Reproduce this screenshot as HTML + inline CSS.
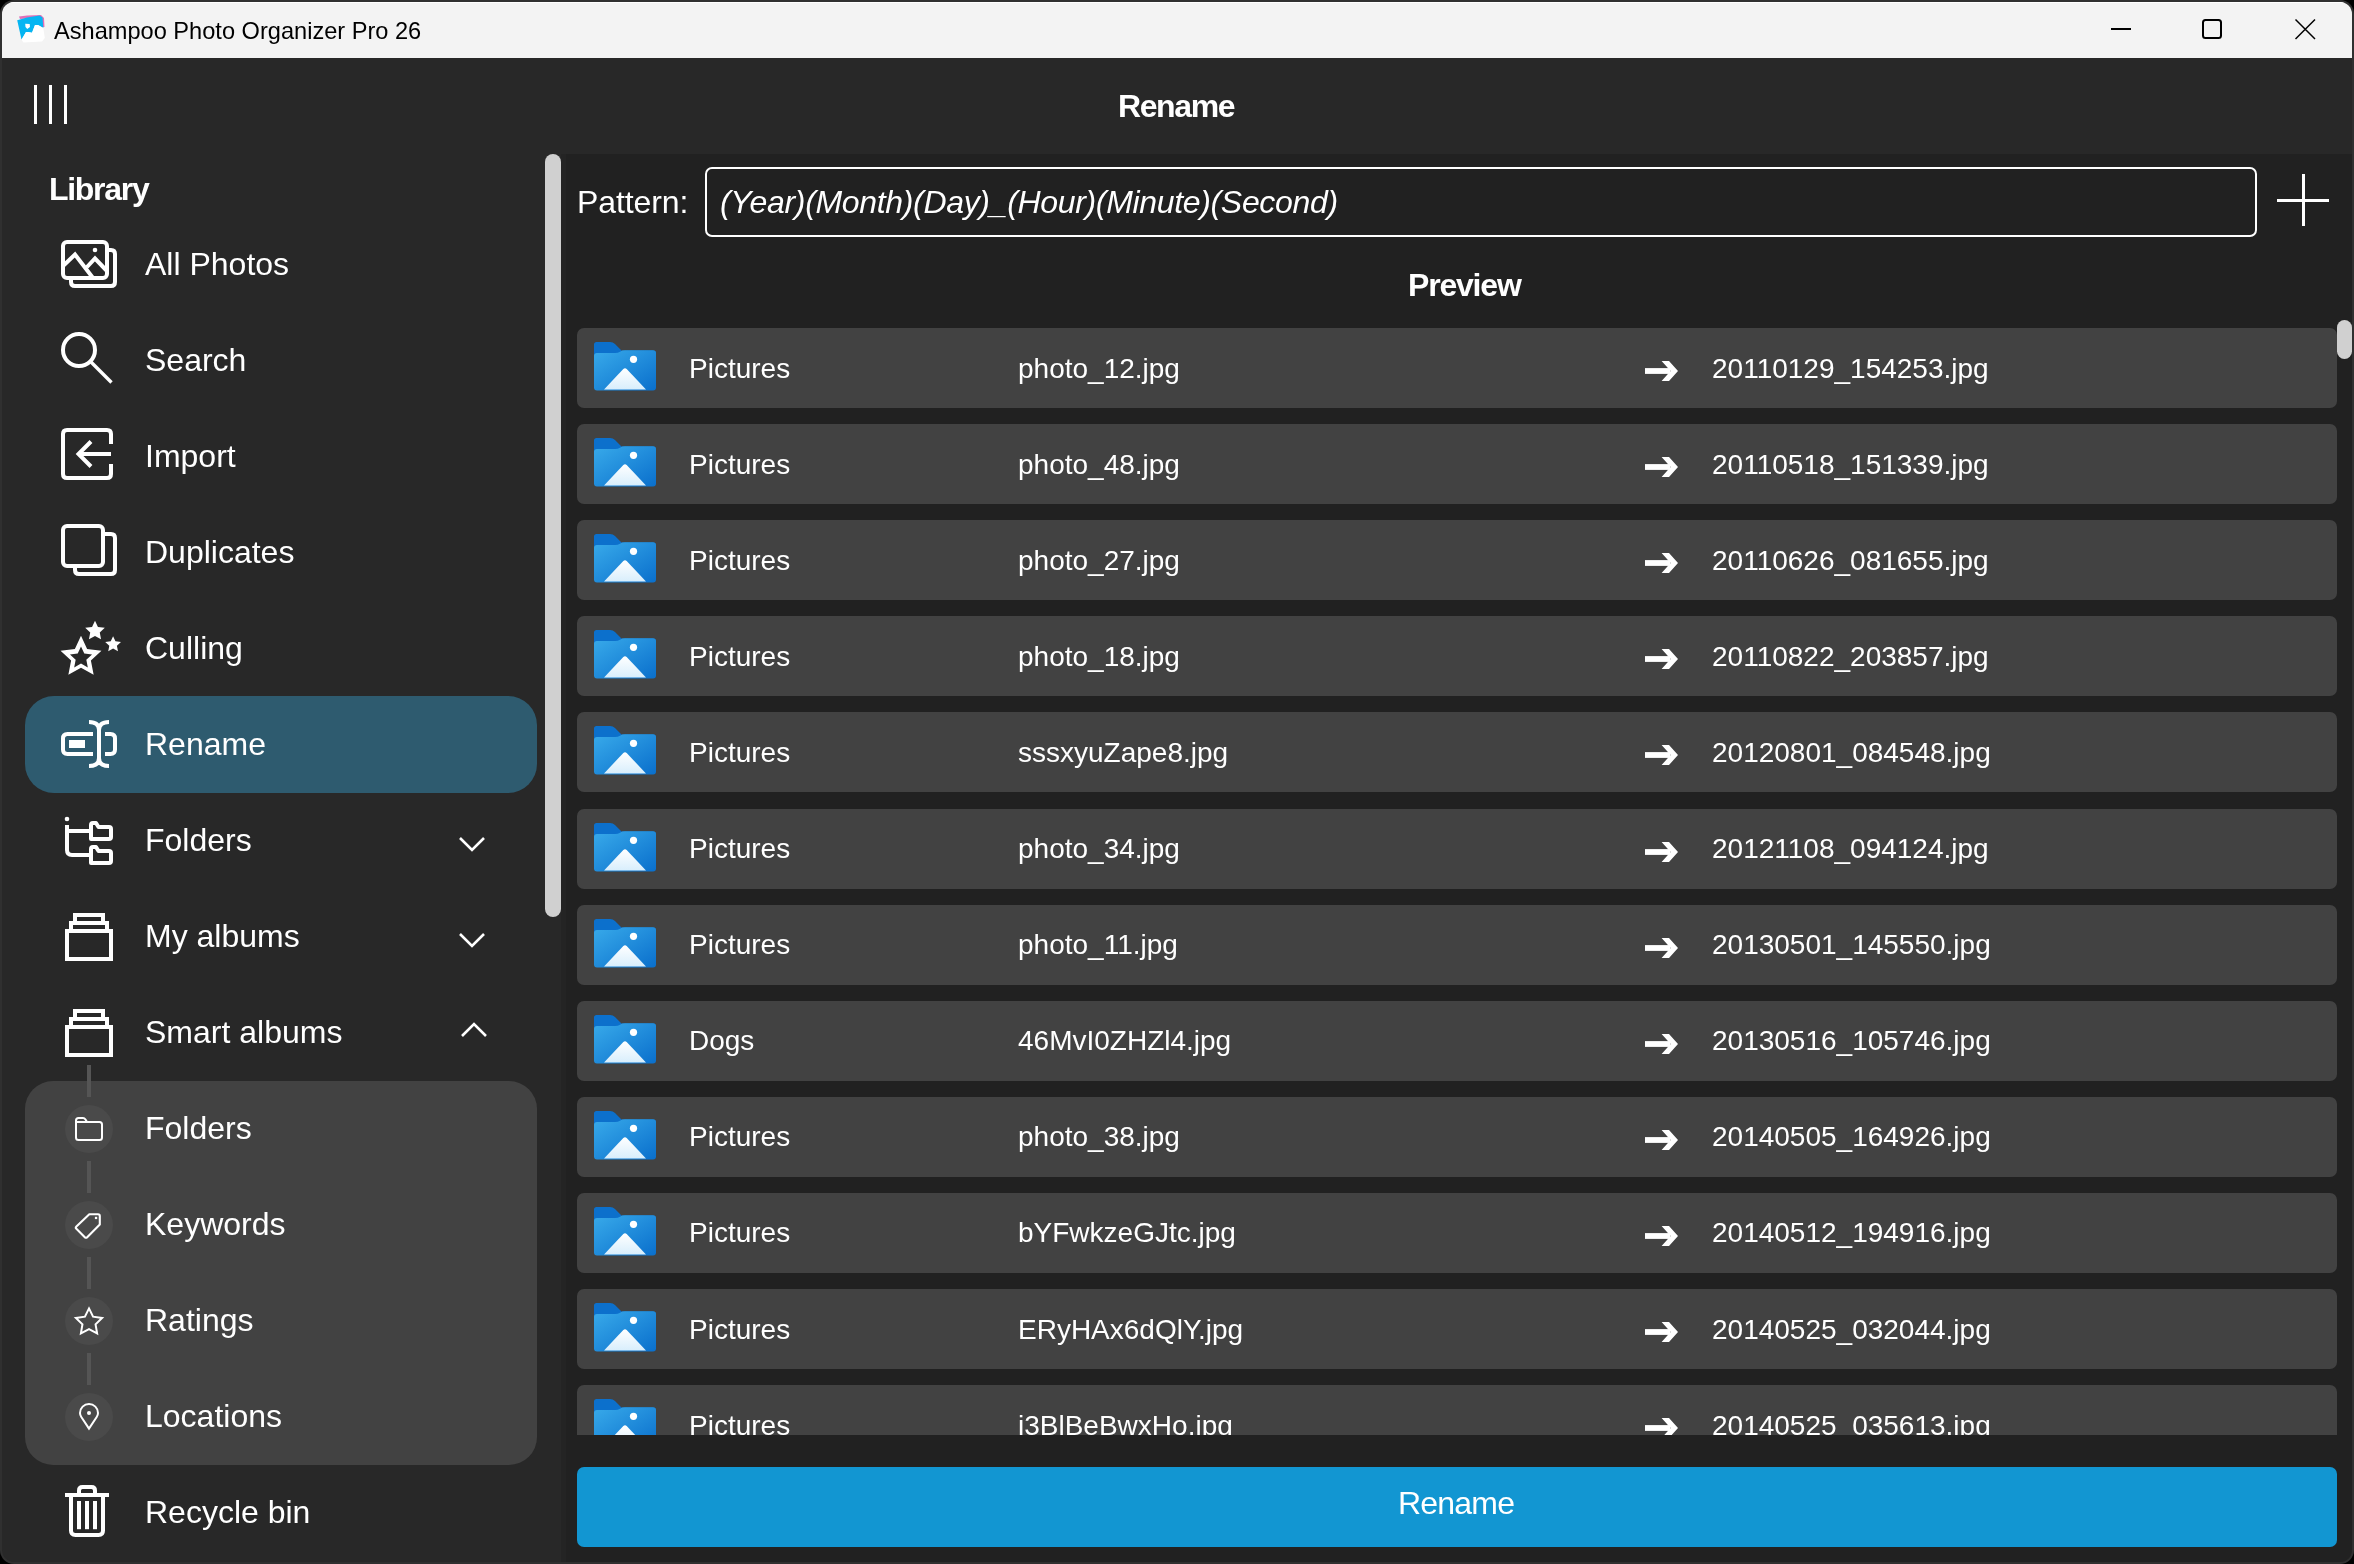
<!DOCTYPE html>
<html><head><meta charset="utf-8">
<style>
*{box-sizing:border-box;margin:0;padding:0}
html,body{width:2354px;height:1564px;overflow:hidden;background:#000}
#win{position:absolute;left:0;top:0;width:2354px;height:1564px;border-radius:14px;background:#303030}
#inner{position:absolute;left:0;top:0;width:2354px;height:1564px;background:#282828;clip-path:inset(2px round 12px)}
.a{position:absolute;display:block}
.t{position:absolute;white-space:nowrap;line-height:1;font-family:"Liberation Sans",sans-serif;color:#fff;will-change:transform}
</style></head><body>
<div id="win"></div><div id="inner">
<div class="a" style="left:0;top:0;width:2354px;height:58px;background:#f3f3f3"></div>
<div class="a" style="left:0;top:2px;width:2354px;height:1px;background:#fff"></div>
<svg class="a" style="left:14px;top:12px" width="34" height="34" viewBox="14 12 34 34"><path d="M19 16.5 L27 15.6 L41 15 L44 18 L44.5 27 L42 27 L40 17.5 L20 19 Z" fill="#e070b8"/><path d="M17.2 20.2 L27 17.5 L39.5 15.5 L42.5 17.5 L43.3 28 L38 25 L35 25 L32 32.8 L28 32 L26 32 L21.5 39.5 Z" fill="#05b5f2"/><path d="M21.5 39.8 L26 32 L28 32 L32 32.8 L35 25 L38 25 L43.3 28 L44.8 38 L42 41.5 L23.5 42.5 Z" fill="#ffffff"/><path d="M25.2 23.8 L29.7 24 L30 27 L27.2 29 L25.5 27 Z" fill="#fff"/></svg>
<div class="t" style="left:53.5px;top:19.5px;font-size:23.6px;font-weight:400;font-style:normal;color:#000;letter-spacing:0px;">Ashampoo Photo Organizer Pro 26</div>
<div class="a" style="left:2111px;top:28px;width:20px;height:2px;background:#000"></div>
<svg class="a" style="left:2195px;top:12px" width="34" height="34" viewBox="2195 12 34 34"><rect x="2203" y="20" width="18" height="18" rx="2.5" fill="none" stroke="#000" stroke-width="2"/></svg>
<svg class="a" style="left:2288px;top:12px" width="34" height="34" viewBox="2288 12 34 34"><path d="M2295.5 19.5 L2315 39 M2315 19.5 L2295.5 39" stroke="#000" stroke-width="1.5"/></svg>
<div class="a" style="left:34px;top:85px;width:3px;height:39px;background:#fff"></div>
<div class="a" style="left:49px;top:85px;width:3px;height:39px;background:#fff"></div>
<div class="a" style="left:64px;top:85px;width:3px;height:39px;background:#fff"></div>
<div class="t" style="left:1117.5px;top:89.9px;font-size:32px;font-weight:700;font-style:normal;color:#fff;letter-spacing:-1.4px;">Rename</div>
<div class="t" style="left:48.6px;top:172.9px;font-size:32px;font-weight:700;font-style:normal;color:#fff;letter-spacing:-1.3px;">Library</div>
<div class="a" style="left:25px;top:696px;width:512px;height:97px;border-radius:29px;background:#2e5b6f"></div>
<div class="a" style="left:25px;top:1081px;width:512px;height:384px;border-radius:28px;background:#424242"></div>
<div class="t" style="left:145.0px;top:247.9px;font-size:32px;font-weight:400;font-style:normal;color:#fff;letter-spacing:0px;">All Photos</div>
<div class="t" style="left:145.0px;top:343.9px;font-size:32px;font-weight:400;font-style:normal;color:#fff;letter-spacing:0px;">Search</div>
<div class="t" style="left:145.0px;top:439.9px;font-size:32px;font-weight:400;font-style:normal;color:#fff;letter-spacing:0px;">Import</div>
<div class="t" style="left:145.0px;top:535.9px;font-size:32px;font-weight:400;font-style:normal;color:#fff;letter-spacing:0px;">Duplicates</div>
<div class="t" style="left:145.0px;top:631.9px;font-size:32px;font-weight:400;font-style:normal;color:#fff;letter-spacing:0px;">Culling</div>
<div class="t" style="left:145.0px;top:727.9px;font-size:32px;font-weight:400;font-style:normal;color:#fff;letter-spacing:0px;">Rename</div>
<div class="t" style="left:145.0px;top:823.9px;font-size:32px;font-weight:400;font-style:normal;color:#fff;letter-spacing:0px;">Folders</div>
<div class="t" style="left:145.0px;top:919.9px;font-size:32px;font-weight:400;font-style:normal;color:#fff;letter-spacing:0px;">My albums</div>
<div class="t" style="left:145.0px;top:1015.9px;font-size:32px;font-weight:400;font-style:normal;color:#fff;letter-spacing:0px;">Smart albums</div>
<div class="t" style="left:145.0px;top:1111.9px;font-size:32px;font-weight:400;font-style:normal;color:#fff;letter-spacing:0px;">Folders</div>
<div class="t" style="left:145.0px;top:1207.9px;font-size:32px;font-weight:400;font-style:normal;color:#fff;letter-spacing:0px;">Keywords</div>
<div class="t" style="left:145.0px;top:1303.9px;font-size:32px;font-weight:400;font-style:normal;color:#fff;letter-spacing:0px;">Ratings</div>
<div class="t" style="left:145.0px;top:1399.9px;font-size:32px;font-weight:400;font-style:normal;color:#fff;letter-spacing:0px;">Locations</div>
<div class="t" style="left:145.0px;top:1495.9px;font-size:32px;font-weight:400;font-style:normal;color:#fff;letter-spacing:0px;">Recycle bin</div>
<svg class="a" style="left:55px;top:234px" width="70" height="60" viewBox="55 234 70 60"><path d="M71 279 V282 Q71 286 75 286 H111 Q115 286 115 282 V254 Q115 250 111 250 H107" fill="none" stroke="#fff" stroke-width="4"/><rect x="63" y="242" width="44" height="36" rx="4" fill="none" stroke="#fff" stroke-width="4"/><path d="M63 266 L75 254.5 L93 278 M87 267 L95 258.5 L107 271" fill="none" stroke="#fff" stroke-width="4" stroke-linejoin="miter"/><circle cx="95" cy="250" r="2.3" fill="#fff"/></svg>
<svg class="a" style="left:55px;top:326px" width="70" height="64" viewBox="55 326 70 64"><circle cx="79" cy="350" r="16" fill="none" stroke="#fff" stroke-width="4"/><path d="M90.5 361.5 L111.5 382.5" stroke="#fff" stroke-width="3.4"/></svg>
<svg class="a" style="left:55px;top:422px" width="70" height="64" viewBox="55 422 70 64"><path d="M111 444 V434 Q111 430 107 430 H67 Q63 430 63 434 V474 Q63 478 67 478 H107 Q111 478 111 474 V464" fill="none" stroke="#fff" stroke-width="4"/><path d="M111 454 H79 M91 441.5 L78.5 454 L91 466.5" fill="none" stroke="#fff" stroke-width="4"/></svg>
<svg class="a" style="left:55px;top:518px" width="70" height="64" viewBox="55 518 70 64"><path d="M75 566 V570 Q75 574 79 574 H111 Q115 574 115 570 V538 Q115 534 111 534 H103" fill="none" stroke="#fff" stroke-width="4"/><rect x="63" y="526" width="40" height="40" rx="4" fill="none" stroke="#fff" stroke-width="4"/></svg>
<svg class="a" style="left:55px;top:614px" width="72" height="66" viewBox="55 614 72 66"><polygon points="81.00,635.80 87.11,648.89 101.45,650.66 90.89,660.51 93.64,674.69 81.00,667.70 68.36,674.69 71.11,660.51 60.55,650.66 74.89,648.89" fill="#fff"/><polygon points="81.00,646.40 84.29,653.47 92.03,654.42 86.33,659.73 87.82,667.38 81.00,663.60 74.18,667.38 75.67,659.73 69.97,654.42 77.71,653.47" fill="#282828"/><polygon points="95.00,620.70 97.94,626.95 104.80,627.82 99.76,632.55 101.05,639.33 95.00,636.00 88.95,639.33 90.24,632.55 85.20,627.82 92.06,626.95" fill="#fff"/><polygon points="113.10,636.20 115.45,641.26 120.99,641.94 116.90,645.74 117.98,651.21 113.10,648.50 108.22,651.21 109.30,645.74 105.21,641.94 110.75,641.26" fill="#fff"/></svg>
<svg class="a" style="left:55px;top:712px" width="70" height="64" viewBox="55 712 70 64"><path d="M93 734 H67.5 Q63 734 63 738.5 V749.5 Q63 754 67.5 754 H93 M105 734 H110.5 Q115 734 115 738.5 V749.5 Q115 754 110.5 754 H105" fill="none" stroke="#fff" stroke-width="4"/><rect x="69" y="740" width="16" height="8" fill="#fff"/><path d="M89 722 Q99 722 99 730 Q99 722 109 722 M99 728 V760 M89 766 Q99 766 99 758 Q99 766 109 766" fill="none" stroke="#fff" stroke-width="4"/></svg>
<svg class="a" style="left:55px;top:808px" width="70" height="64" viewBox="55 808 70 64"><circle cx="67" cy="819" r="2.3" fill="#fff"/><path d="M67 825 V850 Q67 855 72 855 H90 M67 831 H90" fill="none" stroke="#fff" stroke-width="4"/><path d="M91 839 V825 Q91 823 93 823 H96 L98.5 827 H109 Q111 827 111 829 V837 Q111 839 109 839 H93 Q91 839 91 837 Z" fill="none" stroke="#fff" stroke-width="4" stroke-linejoin="round"/><path d="M91 863 V849 Q91 847 93 847 H96 L98.5 851 H109 Q111 851 111 853 V861 Q111 863 109 863 H93 Q91 863 91 861 Z" fill="none" stroke="#fff" stroke-width="4" stroke-linejoin="round"/></svg>
<svg class="a" style="left:55px;top:906px" width="70" height="64" viewBox="55 906 70 64"><rect x="67" y="931" width="44" height="28" fill="none" stroke="#fff" stroke-width="4"/><path d="M71 931 V923 H107 V931 M75 923 V915 H103 V923" fill="none" stroke="#fff" stroke-width="4"/></svg>
<svg class="a" style="left:55px;top:1002px" width="70" height="64" viewBox="55 1002 70 64"><rect x="67" y="1027" width="44" height="28" fill="none" stroke="#fff" stroke-width="4"/><path d="M71 1027 V1019 H107 V1027 M75 1019 V1011 H103 V1019" fill="none" stroke="#fff" stroke-width="4"/></svg>
<svg class="a" style="left:450px;top:825px" width="45" height="35" viewBox="450 825 45 35"><path d="M460 838 L472 850 L484 838" fill="none" stroke="#fff" stroke-width="2.6"/></svg>
<svg class="a" style="left:450px;top:921px" width="45" height="35" viewBox="450 921 45 35"><path d="M460 934 L472 946 L484 934" fill="none" stroke="#fff" stroke-width="2.6"/></svg>
<svg class="a" style="left:452px;top:1014px" width="45" height="35" viewBox="452 1014 45 35"><path d="M462 1036 L474 1024 L486 1036" fill="none" stroke="#fff" stroke-width="2.6"/></svg>
<div class="a" style="left:87px;top:1065px;width:4px;height:32px;background:#555555"></div>
<div class="a" style="left:87px;top:1161px;width:4px;height:32px;background:#555555"></div>
<div class="a" style="left:87px;top:1257px;width:4px;height:32px;background:#555555"></div>
<div class="a" style="left:87px;top:1353px;width:4px;height:32px;background:#555555"></div>
<div class="a" style="left:65px;top:1105px;width:48px;height:48px;border-radius:24px;background:#4a4a4a"></div>
<div class="a" style="left:65px;top:1201px;width:48px;height:48px;border-radius:24px;background:#4a4a4a"></div>
<div class="a" style="left:65px;top:1297px;width:48px;height:48px;border-radius:24px;background:#4a4a4a"></div>
<div class="a" style="left:65px;top:1393px;width:48px;height:48px;border-radius:24px;background:#4a4a4a"></div>
<svg class="a" style="left:65px;top:1105px" width="48" height="48" viewBox="65 1105 48 48"><path d="M76 1137.5 V1120.5 Q76 1118 78.5 1118 H83 Q84.5 1118 85.5 1119.5 L87 1122 H99.5 Q102 1122 102 1124.5 V1137.5 Q102 1140 99.5 1140 H78.5 Q76 1140 76 1137.5 Z M76 1122 H87" fill="none" stroke="#fff" stroke-width="2" stroke-linejoin="round"/></svg>
<svg class="a" style="left:65px;top:1201px" width="48" height="48" viewBox="65 1201 48 48"><path d="M89.3 1214.2 H98 Q99.8 1214.2 99.8 1216 V1224.6 L87.2 1237.2 Q86 1238.4 84.8 1237.2 L76.4 1228.8 Q75.2 1227.6 76.4 1226.4 Z" fill="none" stroke="#fff" stroke-width="2.1" stroke-linejoin="round"/><rect x="94.9" y="1216.8" width="2.3" height="2.3" fill="#fff"/></svg>
<svg class="a" style="left:65px;top:1297px" width="48" height="48" viewBox="65 1297 48 48"><polygon points="89.00,1308.40 93.06,1316.62 102.12,1317.94 95.56,1324.33 97.11,1333.36 89.00,1329.10 80.89,1333.36 82.44,1324.33 75.88,1317.94 84.94,1316.62" fill="none" stroke="#fff" stroke-width="2" stroke-linejoin="miter"/></svg>
<svg class="a" style="left:65px;top:1393px" width="48" height="48" viewBox="65 1393 48 48"><path d="M89 1428.6 L81.3 1417 Q80 1415 80 1413 A9 9 0 0 1 98 1413 Q98 1415 96.7 1417 Z" fill="none" stroke="#fff" stroke-width="2" stroke-linejoin="miter"/><circle cx="89" cy="1413" r="2" fill="#fff"/></svg>
<svg class="a" style="left:55px;top:1480px" width="70" height="64" viewBox="55 1480 70 64"><path d="M65 1495 H109" stroke="#fff" stroke-width="4"/><path d="M79 1494 V1490.5 Q79 1487 82.5 1487 H91.5 Q95 1487 95 1490.5 V1494" fill="none" stroke="#fff" stroke-width="4"/><path d="M71 1495 V1530.5 Q71 1535 75.5 1535 H98.5 Q103 1535 103 1530.5 V1495" fill="none" stroke="#fff" stroke-width="4"/><rect x="77" y="1501" width="4" height="28.2" fill="#fff"/><rect x="85" y="1501" width="4" height="28.2" fill="#fff"/><rect x="93" y="1501" width="4" height="28.2" fill="#fff"/></svg>
<div class="a" style="left:545px;top:154px;width:16px;height:763px;border-radius:8px;background:#d0d0d0"></div>
<div class="a" style="left:561px;top:154px;width:1793px;height:1410px;background:#212121"></div>
<div class="a" style="left:561px;top:154px;width:5px;height:1410px;background:#242424"></div>
<div class="t" style="left:576.8px;top:185.7px;font-size:32px;font-weight:400;font-style:normal;color:#fff;letter-spacing:-0.1px;">Pattern:</div>
<div class="a" style="left:705px;top:167px;width:1552px;height:70px;border:2px solid #fff;border-radius:7px"></div>
<div class="t" style="left:720.0px;top:185.9px;font-size:32px;font-weight:400;font-style:italic;color:#fff;letter-spacing:-0.33px;">(Year)(Month)(Day)_(Hour)(Minute)(Second)</div>
<div class="a" style="left:2277px;top:198.5px;width:52px;height:3px;background:#fff"></div>
<div class="a" style="left:2301.5px;top:174px;width:3px;height:52px;background:#fff"></div>
<div class="t" style="left:1407.6px;top:268.9px;font-size:32px;font-weight:700;font-style:normal;color:#fff;letter-spacing:-1.2px;">Preview</div>
<div class="a" style="left:577px;top:320px;width:1760px;height:1115px;overflow:hidden"><div class="a" style="left:0;top:8.0px;width:1760px;height:80px;border-radius:7px;background:#424242"><svg class="a" style="left:16px;top:10px" width="64" height="56" viewBox="0 0 64 56"><defs><linearGradient id="fg0" x1="0" y1="0" x2="1" y2="1"><stop offset="0" stop-color="#38aaea"/><stop offset="1" stop-color="#0a6fcc"/></linearGradient></defs><path d="M1 6.5 Q1 4 3.5 4 H17 Q20 4 22 6 L28.5 12.5 H60 Q63 12.5 63 15.5 V24 H1 Z" fill="#0c70cc"/><path d="M1 18 Q1 15 4 15 H22 Q25 15 27 13.7 Q29 12.3 32 12.3 H60 Q63 12.3 63 15.3 V49.5 Q63 52.5 60 52.5 H4 Q1 52.5 1 49.5 Z" fill="url(#fg0)"/><defs><linearGradient id="mg0" x1="0" y1="0" x2="0" y2="1"><stop offset="0" stop-color="#ffffff"/><stop offset="1" stop-color="#d8eefc"/></linearGradient></defs><path d="M11 51.5 L30.3 31 Q32 29.3 33.7 31 L53 51.5 Z" fill="url(#mg0)"/><circle cx="40.5" cy="21.3" r="3.6" fill="#fff"/></svg><div class="t" style="left:112.3px;top:26.5px;font-size:28px;letter-spacing:0px">Pictures</div><div class="t" style="left:440.5px;top:26.5px;font-size:28px;letter-spacing:0px">photo_12.jpg</div><svg class="a" style="left:1060px;top:30px" width="44" height="28" viewBox="0 0 44 28"><rect x="8" y="10.1" width="25" height="5.8" fill="#fff"/><path d="M24.6 3 H32 L41 13 L32 23 H24.6 L33.6 13 Z" fill="#fff"/></svg><div class="t" style="left:1135px;top:26.5px;font-size:28px">20110129_154253.jpg</div></div><div class="a" style="left:0;top:104.1px;width:1760px;height:80px;border-radius:7px;background:#424242"><svg class="a" style="left:16px;top:10px" width="64" height="56" viewBox="0 0 64 56"><defs><linearGradient id="fg1" x1="0" y1="0" x2="1" y2="1"><stop offset="0" stop-color="#38aaea"/><stop offset="1" stop-color="#0a6fcc"/></linearGradient></defs><path d="M1 6.5 Q1 4 3.5 4 H17 Q20 4 22 6 L28.5 12.5 H60 Q63 12.5 63 15.5 V24 H1 Z" fill="#0c70cc"/><path d="M1 18 Q1 15 4 15 H22 Q25 15 27 13.7 Q29 12.3 32 12.3 H60 Q63 12.3 63 15.3 V49.5 Q63 52.5 60 52.5 H4 Q1 52.5 1 49.5 Z" fill="url(#fg1)"/><defs><linearGradient id="mg1" x1="0" y1="0" x2="0" y2="1"><stop offset="0" stop-color="#ffffff"/><stop offset="1" stop-color="#d8eefc"/></linearGradient></defs><path d="M11 51.5 L30.3 31 Q32 29.3 33.7 31 L53 51.5 Z" fill="url(#mg1)"/><circle cx="40.5" cy="21.3" r="3.6" fill="#fff"/></svg><div class="t" style="left:112.3px;top:26.5px;font-size:28px;letter-spacing:0px">Pictures</div><div class="t" style="left:440.5px;top:26.5px;font-size:28px;letter-spacing:0px">photo_48.jpg</div><svg class="a" style="left:1060px;top:30px" width="44" height="28" viewBox="0 0 44 28"><rect x="8" y="10.1" width="25" height="5.8" fill="#fff"/><path d="M24.6 3 H32 L41 13 L32 23 H24.6 L33.6 13 Z" fill="#fff"/></svg><div class="t" style="left:1135px;top:26.5px;font-size:28px">20110518_151339.jpg</div></div><div class="a" style="left:0;top:200.2px;width:1760px;height:80px;border-radius:7px;background:#424242"><svg class="a" style="left:16px;top:10px" width="64" height="56" viewBox="0 0 64 56"><defs><linearGradient id="fg2" x1="0" y1="0" x2="1" y2="1"><stop offset="0" stop-color="#38aaea"/><stop offset="1" stop-color="#0a6fcc"/></linearGradient></defs><path d="M1 6.5 Q1 4 3.5 4 H17 Q20 4 22 6 L28.5 12.5 H60 Q63 12.5 63 15.5 V24 H1 Z" fill="#0c70cc"/><path d="M1 18 Q1 15 4 15 H22 Q25 15 27 13.7 Q29 12.3 32 12.3 H60 Q63 12.3 63 15.3 V49.5 Q63 52.5 60 52.5 H4 Q1 52.5 1 49.5 Z" fill="url(#fg2)"/><defs><linearGradient id="mg2" x1="0" y1="0" x2="0" y2="1"><stop offset="0" stop-color="#ffffff"/><stop offset="1" stop-color="#d8eefc"/></linearGradient></defs><path d="M11 51.5 L30.3 31 Q32 29.3 33.7 31 L53 51.5 Z" fill="url(#mg2)"/><circle cx="40.5" cy="21.3" r="3.6" fill="#fff"/></svg><div class="t" style="left:112.3px;top:26.5px;font-size:28px;letter-spacing:0px">Pictures</div><div class="t" style="left:440.5px;top:26.5px;font-size:28px;letter-spacing:0px">photo_27.jpg</div><svg class="a" style="left:1060px;top:30px" width="44" height="28" viewBox="0 0 44 28"><rect x="8" y="10.1" width="25" height="5.8" fill="#fff"/><path d="M24.6 3 H32 L41 13 L32 23 H24.6 L33.6 13 Z" fill="#fff"/></svg><div class="t" style="left:1135px;top:26.5px;font-size:28px">20110626_081655.jpg</div></div><div class="a" style="left:0;top:296.3px;width:1760px;height:80px;border-radius:7px;background:#424242"><svg class="a" style="left:16px;top:10px" width="64" height="56" viewBox="0 0 64 56"><defs><linearGradient id="fg3" x1="0" y1="0" x2="1" y2="1"><stop offset="0" stop-color="#38aaea"/><stop offset="1" stop-color="#0a6fcc"/></linearGradient></defs><path d="M1 6.5 Q1 4 3.5 4 H17 Q20 4 22 6 L28.5 12.5 H60 Q63 12.5 63 15.5 V24 H1 Z" fill="#0c70cc"/><path d="M1 18 Q1 15 4 15 H22 Q25 15 27 13.7 Q29 12.3 32 12.3 H60 Q63 12.3 63 15.3 V49.5 Q63 52.5 60 52.5 H4 Q1 52.5 1 49.5 Z" fill="url(#fg3)"/><defs><linearGradient id="mg3" x1="0" y1="0" x2="0" y2="1"><stop offset="0" stop-color="#ffffff"/><stop offset="1" stop-color="#d8eefc"/></linearGradient></defs><path d="M11 51.5 L30.3 31 Q32 29.3 33.7 31 L53 51.5 Z" fill="url(#mg3)"/><circle cx="40.5" cy="21.3" r="3.6" fill="#fff"/></svg><div class="t" style="left:112.3px;top:26.5px;font-size:28px;letter-spacing:0px">Pictures</div><div class="t" style="left:440.5px;top:26.5px;font-size:28px;letter-spacing:0px">photo_18.jpg</div><svg class="a" style="left:1060px;top:30px" width="44" height="28" viewBox="0 0 44 28"><rect x="8" y="10.1" width="25" height="5.8" fill="#fff"/><path d="M24.6 3 H32 L41 13 L32 23 H24.6 L33.6 13 Z" fill="#fff"/></svg><div class="t" style="left:1135px;top:26.5px;font-size:28px">20110822_203857.jpg</div></div><div class="a" style="left:0;top:392.4px;width:1760px;height:80px;border-radius:7px;background:#424242"><svg class="a" style="left:16px;top:10px" width="64" height="56" viewBox="0 0 64 56"><defs><linearGradient id="fg4" x1="0" y1="0" x2="1" y2="1"><stop offset="0" stop-color="#38aaea"/><stop offset="1" stop-color="#0a6fcc"/></linearGradient></defs><path d="M1 6.5 Q1 4 3.5 4 H17 Q20 4 22 6 L28.5 12.5 H60 Q63 12.5 63 15.5 V24 H1 Z" fill="#0c70cc"/><path d="M1 18 Q1 15 4 15 H22 Q25 15 27 13.7 Q29 12.3 32 12.3 H60 Q63 12.3 63 15.3 V49.5 Q63 52.5 60 52.5 H4 Q1 52.5 1 49.5 Z" fill="url(#fg4)"/><defs><linearGradient id="mg4" x1="0" y1="0" x2="0" y2="1"><stop offset="0" stop-color="#ffffff"/><stop offset="1" stop-color="#d8eefc"/></linearGradient></defs><path d="M11 51.5 L30.3 31 Q32 29.3 33.7 31 L53 51.5 Z" fill="url(#mg4)"/><circle cx="40.5" cy="21.3" r="3.6" fill="#fff"/></svg><div class="t" style="left:112.3px;top:26.5px;font-size:28px;letter-spacing:0px">Pictures</div><div class="t" style="left:440.5px;top:26.5px;font-size:28px;letter-spacing:0px">sssxyuZape8.jpg</div><svg class="a" style="left:1060px;top:30px" width="44" height="28" viewBox="0 0 44 28"><rect x="8" y="10.1" width="25" height="5.8" fill="#fff"/><path d="M24.6 3 H32 L41 13 L32 23 H24.6 L33.6 13 Z" fill="#fff"/></svg><div class="t" style="left:1135px;top:26.5px;font-size:28px">20120801_084548.jpg</div></div><div class="a" style="left:0;top:488.5px;width:1760px;height:80px;border-radius:7px;background:#424242"><svg class="a" style="left:16px;top:10px" width="64" height="56" viewBox="0 0 64 56"><defs><linearGradient id="fg5" x1="0" y1="0" x2="1" y2="1"><stop offset="0" stop-color="#38aaea"/><stop offset="1" stop-color="#0a6fcc"/></linearGradient></defs><path d="M1 6.5 Q1 4 3.5 4 H17 Q20 4 22 6 L28.5 12.5 H60 Q63 12.5 63 15.5 V24 H1 Z" fill="#0c70cc"/><path d="M1 18 Q1 15 4 15 H22 Q25 15 27 13.7 Q29 12.3 32 12.3 H60 Q63 12.3 63 15.3 V49.5 Q63 52.5 60 52.5 H4 Q1 52.5 1 49.5 Z" fill="url(#fg5)"/><defs><linearGradient id="mg5" x1="0" y1="0" x2="0" y2="1"><stop offset="0" stop-color="#ffffff"/><stop offset="1" stop-color="#d8eefc"/></linearGradient></defs><path d="M11 51.5 L30.3 31 Q32 29.3 33.7 31 L53 51.5 Z" fill="url(#mg5)"/><circle cx="40.5" cy="21.3" r="3.6" fill="#fff"/></svg><div class="t" style="left:112.3px;top:26.5px;font-size:28px;letter-spacing:0px">Pictures</div><div class="t" style="left:440.5px;top:26.5px;font-size:28px;letter-spacing:0px">photo_34.jpg</div><svg class="a" style="left:1060px;top:30px" width="44" height="28" viewBox="0 0 44 28"><rect x="8" y="10.1" width="25" height="5.8" fill="#fff"/><path d="M24.6 3 H32 L41 13 L32 23 H24.6 L33.6 13 Z" fill="#fff"/></svg><div class="t" style="left:1135px;top:26.5px;font-size:28px">20121108_094124.jpg</div></div><div class="a" style="left:0;top:584.6px;width:1760px;height:80px;border-radius:7px;background:#424242"><svg class="a" style="left:16px;top:10px" width="64" height="56" viewBox="0 0 64 56"><defs><linearGradient id="fg6" x1="0" y1="0" x2="1" y2="1"><stop offset="0" stop-color="#38aaea"/><stop offset="1" stop-color="#0a6fcc"/></linearGradient></defs><path d="M1 6.5 Q1 4 3.5 4 H17 Q20 4 22 6 L28.5 12.5 H60 Q63 12.5 63 15.5 V24 H1 Z" fill="#0c70cc"/><path d="M1 18 Q1 15 4 15 H22 Q25 15 27 13.7 Q29 12.3 32 12.3 H60 Q63 12.3 63 15.3 V49.5 Q63 52.5 60 52.5 H4 Q1 52.5 1 49.5 Z" fill="url(#fg6)"/><defs><linearGradient id="mg6" x1="0" y1="0" x2="0" y2="1"><stop offset="0" stop-color="#ffffff"/><stop offset="1" stop-color="#d8eefc"/></linearGradient></defs><path d="M11 51.5 L30.3 31 Q32 29.3 33.7 31 L53 51.5 Z" fill="url(#mg6)"/><circle cx="40.5" cy="21.3" r="3.6" fill="#fff"/></svg><div class="t" style="left:112.3px;top:26.5px;font-size:28px;letter-spacing:0px">Pictures</div><div class="t" style="left:440.5px;top:26.5px;font-size:28px;letter-spacing:0px">photo_11.jpg</div><svg class="a" style="left:1060px;top:30px" width="44" height="28" viewBox="0 0 44 28"><rect x="8" y="10.1" width="25" height="5.8" fill="#fff"/><path d="M24.6 3 H32 L41 13 L32 23 H24.6 L33.6 13 Z" fill="#fff"/></svg><div class="t" style="left:1135px;top:26.5px;font-size:28px">20130501_145550.jpg</div></div><div class="a" style="left:0;top:680.7px;width:1760px;height:80px;border-radius:7px;background:#424242"><svg class="a" style="left:16px;top:10px" width="64" height="56" viewBox="0 0 64 56"><defs><linearGradient id="fg7" x1="0" y1="0" x2="1" y2="1"><stop offset="0" stop-color="#38aaea"/><stop offset="1" stop-color="#0a6fcc"/></linearGradient></defs><path d="M1 6.5 Q1 4 3.5 4 H17 Q20 4 22 6 L28.5 12.5 H60 Q63 12.5 63 15.5 V24 H1 Z" fill="#0c70cc"/><path d="M1 18 Q1 15 4 15 H22 Q25 15 27 13.7 Q29 12.3 32 12.3 H60 Q63 12.3 63 15.3 V49.5 Q63 52.5 60 52.5 H4 Q1 52.5 1 49.5 Z" fill="url(#fg7)"/><defs><linearGradient id="mg7" x1="0" y1="0" x2="0" y2="1"><stop offset="0" stop-color="#ffffff"/><stop offset="1" stop-color="#d8eefc"/></linearGradient></defs><path d="M11 51.5 L30.3 31 Q32 29.3 33.7 31 L53 51.5 Z" fill="url(#mg7)"/><circle cx="40.5" cy="21.3" r="3.6" fill="#fff"/></svg><div class="t" style="left:112.3px;top:26.5px;font-size:28px;letter-spacing:0px">Dogs</div><div class="t" style="left:440.5px;top:26.5px;font-size:28px;letter-spacing:0px">46MvI0ZHZl4.jpg</div><svg class="a" style="left:1060px;top:30px" width="44" height="28" viewBox="0 0 44 28"><rect x="8" y="10.1" width="25" height="5.8" fill="#fff"/><path d="M24.6 3 H32 L41 13 L32 23 H24.6 L33.6 13 Z" fill="#fff"/></svg><div class="t" style="left:1135px;top:26.5px;font-size:28px">20130516_105746.jpg</div></div><div class="a" style="left:0;top:776.8px;width:1760px;height:80px;border-radius:7px;background:#424242"><svg class="a" style="left:16px;top:10px" width="64" height="56" viewBox="0 0 64 56"><defs><linearGradient id="fg8" x1="0" y1="0" x2="1" y2="1"><stop offset="0" stop-color="#38aaea"/><stop offset="1" stop-color="#0a6fcc"/></linearGradient></defs><path d="M1 6.5 Q1 4 3.5 4 H17 Q20 4 22 6 L28.5 12.5 H60 Q63 12.5 63 15.5 V24 H1 Z" fill="#0c70cc"/><path d="M1 18 Q1 15 4 15 H22 Q25 15 27 13.7 Q29 12.3 32 12.3 H60 Q63 12.3 63 15.3 V49.5 Q63 52.5 60 52.5 H4 Q1 52.5 1 49.5 Z" fill="url(#fg8)"/><defs><linearGradient id="mg8" x1="0" y1="0" x2="0" y2="1"><stop offset="0" stop-color="#ffffff"/><stop offset="1" stop-color="#d8eefc"/></linearGradient></defs><path d="M11 51.5 L30.3 31 Q32 29.3 33.7 31 L53 51.5 Z" fill="url(#mg8)"/><circle cx="40.5" cy="21.3" r="3.6" fill="#fff"/></svg><div class="t" style="left:112.3px;top:26.5px;font-size:28px;letter-spacing:0px">Pictures</div><div class="t" style="left:440.5px;top:26.5px;font-size:28px;letter-spacing:0px">photo_38.jpg</div><svg class="a" style="left:1060px;top:30px" width="44" height="28" viewBox="0 0 44 28"><rect x="8" y="10.1" width="25" height="5.8" fill="#fff"/><path d="M24.6 3 H32 L41 13 L32 23 H24.6 L33.6 13 Z" fill="#fff"/></svg><div class="t" style="left:1135px;top:26.5px;font-size:28px">20140505_164926.jpg</div></div><div class="a" style="left:0;top:872.9px;width:1760px;height:80px;border-radius:7px;background:#424242"><svg class="a" style="left:16px;top:10px" width="64" height="56" viewBox="0 0 64 56"><defs><linearGradient id="fg9" x1="0" y1="0" x2="1" y2="1"><stop offset="0" stop-color="#38aaea"/><stop offset="1" stop-color="#0a6fcc"/></linearGradient></defs><path d="M1 6.5 Q1 4 3.5 4 H17 Q20 4 22 6 L28.5 12.5 H60 Q63 12.5 63 15.5 V24 H1 Z" fill="#0c70cc"/><path d="M1 18 Q1 15 4 15 H22 Q25 15 27 13.7 Q29 12.3 32 12.3 H60 Q63 12.3 63 15.3 V49.5 Q63 52.5 60 52.5 H4 Q1 52.5 1 49.5 Z" fill="url(#fg9)"/><defs><linearGradient id="mg9" x1="0" y1="0" x2="0" y2="1"><stop offset="0" stop-color="#ffffff"/><stop offset="1" stop-color="#d8eefc"/></linearGradient></defs><path d="M11 51.5 L30.3 31 Q32 29.3 33.7 31 L53 51.5 Z" fill="url(#mg9)"/><circle cx="40.5" cy="21.3" r="3.6" fill="#fff"/></svg><div class="t" style="left:112.3px;top:26.5px;font-size:28px;letter-spacing:0px">Pictures</div><div class="t" style="left:440.5px;top:26.5px;font-size:28px;letter-spacing:0px">bYFwkzeGJtc.jpg</div><svg class="a" style="left:1060px;top:30px" width="44" height="28" viewBox="0 0 44 28"><rect x="8" y="10.1" width="25" height="5.8" fill="#fff"/><path d="M24.6 3 H32 L41 13 L32 23 H24.6 L33.6 13 Z" fill="#fff"/></svg><div class="t" style="left:1135px;top:26.5px;font-size:28px">20140512_194916.jpg</div></div><div class="a" style="left:0;top:969.0px;width:1760px;height:80px;border-radius:7px;background:#424242"><svg class="a" style="left:16px;top:10px" width="64" height="56" viewBox="0 0 64 56"><defs><linearGradient id="fg10" x1="0" y1="0" x2="1" y2="1"><stop offset="0" stop-color="#38aaea"/><stop offset="1" stop-color="#0a6fcc"/></linearGradient></defs><path d="M1 6.5 Q1 4 3.5 4 H17 Q20 4 22 6 L28.5 12.5 H60 Q63 12.5 63 15.5 V24 H1 Z" fill="#0c70cc"/><path d="M1 18 Q1 15 4 15 H22 Q25 15 27 13.7 Q29 12.3 32 12.3 H60 Q63 12.3 63 15.3 V49.5 Q63 52.5 60 52.5 H4 Q1 52.5 1 49.5 Z" fill="url(#fg10)"/><defs><linearGradient id="mg10" x1="0" y1="0" x2="0" y2="1"><stop offset="0" stop-color="#ffffff"/><stop offset="1" stop-color="#d8eefc"/></linearGradient></defs><path d="M11 51.5 L30.3 31 Q32 29.3 33.7 31 L53 51.5 Z" fill="url(#mg10)"/><circle cx="40.5" cy="21.3" r="3.6" fill="#fff"/></svg><div class="t" style="left:112.3px;top:26.5px;font-size:28px;letter-spacing:0px">Pictures</div><div class="t" style="left:440.5px;top:26.5px;font-size:28px;letter-spacing:0px">ERyHAx6dQlY.jpg</div><svg class="a" style="left:1060px;top:30px" width="44" height="28" viewBox="0 0 44 28"><rect x="8" y="10.1" width="25" height="5.8" fill="#fff"/><path d="M24.6 3 H32 L41 13 L32 23 H24.6 L33.6 13 Z" fill="#fff"/></svg><div class="t" style="left:1135px;top:26.5px;font-size:28px">20140525_032044.jpg</div></div><div class="a" style="left:0;top:1065.1px;width:1760px;height:80px;border-radius:7px;background:#424242"><svg class="a" style="left:16px;top:10px" width="64" height="56" viewBox="0 0 64 56"><defs><linearGradient id="fg11" x1="0" y1="0" x2="1" y2="1"><stop offset="0" stop-color="#38aaea"/><stop offset="1" stop-color="#0a6fcc"/></linearGradient></defs><path d="M1 6.5 Q1 4 3.5 4 H17 Q20 4 22 6 L28.5 12.5 H60 Q63 12.5 63 15.5 V24 H1 Z" fill="#0c70cc"/><path d="M1 18 Q1 15 4 15 H22 Q25 15 27 13.7 Q29 12.3 32 12.3 H60 Q63 12.3 63 15.3 V49.5 Q63 52.5 60 52.5 H4 Q1 52.5 1 49.5 Z" fill="url(#fg11)"/><defs><linearGradient id="mg11" x1="0" y1="0" x2="0" y2="1"><stop offset="0" stop-color="#ffffff"/><stop offset="1" stop-color="#d8eefc"/></linearGradient></defs><path d="M11 51.5 L30.3 31 Q32 29.3 33.7 31 L53 51.5 Z" fill="url(#mg11)"/><circle cx="40.5" cy="21.3" r="3.6" fill="#fff"/></svg><div class="t" style="left:112.3px;top:26.5px;font-size:28px;letter-spacing:0px">Pictures</div><div class="t" style="left:440.5px;top:26.5px;font-size:28px;letter-spacing:0px">i3BlBeBwxHo.jpg</div><svg class="a" style="left:1060px;top:30px" width="44" height="28" viewBox="0 0 44 28"><rect x="8" y="10.1" width="25" height="5.8" fill="#fff"/><path d="M24.6 3 H32 L41 13 L32 23 H24.6 L33.6 13 Z" fill="#fff"/></svg><div class="t" style="left:1135px;top:26.5px;font-size:28px">20140525_035613.jpg</div></div></div>
<div class="a" style="left:2337px;top:320px;width:15px;height:39px;border-radius:7.5px;background:#d0d0d0"></div>
<div class="a" style="left:577px;top:1467px;width:1760px;height:80px;border-radius:7px;background:#1296d2"></div>
<div class="t" style="left:1398.3px;top:1486.6px;font-size:32px;font-weight:400;font-style:normal;color:#fff;letter-spacing:-0.8px;">Rename</div>
</div>
</body></html>
